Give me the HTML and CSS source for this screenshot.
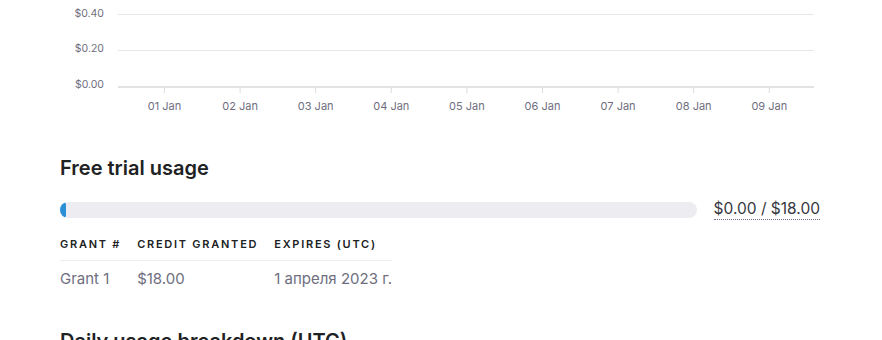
FILE: index.html
```html
<!DOCTYPE html>
<html lang="en">
<head>
    <meta charset="UTF-8">
    <title>Usage</title>
    <link rel="stylesheet" href="styles.css">
</head>
<body>
    <div class="usage-page">
        <div class="usage-chart">
            <svg width="760" height="120" viewBox="0 0 760 120">
                <g class="grid">
                    <line x1="58" y1="14.5" x2="754" y2="14.5"></line>
                    <line x1="58" y1="50.5" x2="754" y2="50.5"></line>
                </g>
                <line class="axis" x1="58" y1="87" x2="754" y2="87"></line>
                <g class="y-labels">
                    <text x="44" y="17">$0.40</text>
                    <text x="44" y="52">$0.20</text>
                    <text x="44" y="88">$0.00</text>
                </g>
                <g class="ticks" id="ticks"></g>
                <g class="x-labels" id="xLabels"></g>
            </svg>
        </div>

        <h2 class="section-title">Free trial usage</h2>

        <div class="trial-progress">
            <div class="progress-bar">
                <div class="progress-fill"></div>
            </div>
            <span class="progress-amount">$0.00 / $18.00</span>
        </div>

        <table class="grants-table">
            <thead>
                <tr>
                    <th>Grant #</th>
                    <th>Credit granted</th>
                    <th>Expires (UTC)</th>
                </tr>
            </thead>
            <tbody>
                <tr>
                    <td>Grant 1</td>
                    <td>$18.00</td>
                    <td>1 апреля 2023 г.</td>
                </tr>
            </tbody>
        </table>

        <h2 class="section-title daily-title">Daily usage breakdown (UTC)</h2>
    </div>

    <script>
        // ticks and date labels for the x axis
        const ticks = document.getElementById('ticks');
        const xLabels = document.getElementById('xLabels');
        const ns = 'http://www.w3.org/2000/svg';
        for (let i = 0; i < 9; i++) {
            const x = 104.5 + i * 75.6;
            const tick = document.createElementNS(ns, 'line');
            tick.setAttribute('x1', x);
            tick.setAttribute('x2', x);
            tick.setAttribute('y1', 88);
            tick.setAttribute('y2', 93);
            ticks.appendChild(tick);

            const label = document.createElementNS(ns, 'text');
            label.setAttribute('x', x);
            label.setAttribute('y', 110);
            label.textContent = '0' + (i + 1) + ' Jan';
            xLabels.appendChild(label);
        }
    </script>
</body>
</html>
```

FILE: styles.css
```css
body {
    margin: 0;
    font-family: Inter, 'Noto Sans', sans-serif;
    background-color: #ffffff;
    color: #202123;
}
.usage-page {
    width: 760px;
    padding-left: 60px;
}
.usage-chart svg {
    display: block;
}
.grid line {
    stroke: #e6e6e9;
    stroke-width: 1;
}
.axis {
    stroke: #e3e3e6;
    stroke-width: 2;
}
.ticks line {
    stroke: #dcdce0;
    stroke-width: 1;
}
.y-labels text {
    font-size: 10.5px;
    fill: #6e6e80;
    text-anchor: end;
}
.x-labels text {
    font-size: 11px;
    fill: #6e6e80;
    text-anchor: middle;
}
.section-title {
    margin: 34px 0 0;
    font-size: 20px;
    line-height: 28px;
    font-weight: 600;
    color: #202123;
}
.trial-progress {
    display: flex;
    align-items: center;
    gap: 17px;
    margin-top: 17px;
}
.progress-bar {
    flex: 1;
    height: 16px;
    border-radius: 8px;
    background-color: #ececf1;
    overflow: hidden;
}
.progress-fill {
    width: 6px;
    height: 100%;
    border-radius: 3px;
    background-color: #2b8fd6;
}
.progress-amount {
    font-size: 15.5px;
    color: #353740;
    border-bottom: 1px dotted #6e6e80;
    line-height: 20px;
}
.grants-table {
    margin-top: 8px;
    border-collapse: collapse;
}
.grants-table th {
    text-align: left;
    font-size: 11px;
    font-weight: 600;
    letter-spacing: 1.75px;
    text-transform: uppercase;
    color: #202123;
    padding: 9px 16px 9px 0;
    border-bottom: 1px solid #ececf1;
}
.grants-table td {
    font-size: 15px;
    color: #6e6e80;
    padding: 8px 16px 8px 0;
}
.grants-table th:last-child,
.grants-table td:last-child {
    padding-right: 0;
}
.daily-title {
    margin-top: 31px;
}
```
